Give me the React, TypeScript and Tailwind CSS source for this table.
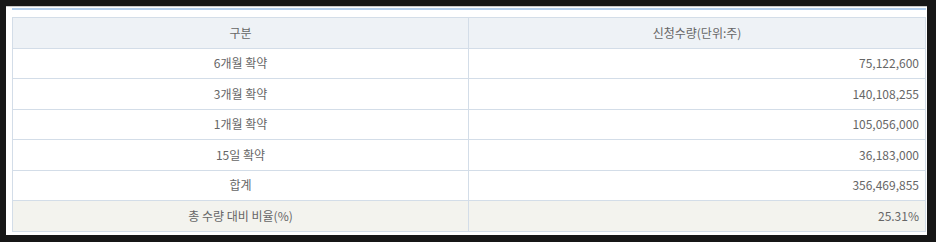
import React from 'react';

interface Row {
  label: string;
  value: string;
  tone?: 'head' | 'foot';
}

const rows: Row[] = [
  { label: '6개월 확약', value: '75,122,600' },
  { label: '3개월 확약', value: '140,108,255' },
  { label: '1개월 확약', value: '105,056,000' },
  { label: '15일 확약', value: '36,183,000' },
  { label: '합계', value: '356,469,855' },
  { label: '총 수량 대비 비율(%)', value: '25.31%', tone: 'foot' },
];

function TableRow({ label, value, tone }: Row): React.JSX.Element {
  const bg = tone === 'head' ? 'bg-[#eef2f6]' : tone === 'foot' ? 'bg-[#f3f3ee]' : 'bg-white';
  return (
    <div className={`flex h-[30.5px] border-b border-[#d3dde8] ${bg}`}>
      <div className="flex w-[456px] items-center justify-center border-r border-[#d3dde8]">{label}</div>
      <div
        className={`flex flex-1 items-center px-[6px] ${tone === 'head' ? 'justify-center' : 'justify-end'}`}
      >
        {value}
      </div>
    </div>
  );
}

export default function App(): React.JSX.Element {
  return (
    <div className="h-[242px] w-[936px] bg-[#171717] pl-[6px] pt-[6px]">
      <div
        className="h-[229px] w-[921px] border-t border-[#c9c9c9] bg-white pl-[6px] pr-[1px] pt-[1px] text-[12px] text-[#666666]"
        style={{ fontFamily: '"Noto Sans CJK KR", "Noto Sans", sans-serif' }}
      >
        <div className="border-t-2 border-[#b3cfee] pt-[7px]">
          <div className="border-t border-l border-r border-[#d3dde8]">
            <TableRow label="구분" value="신청수량(단위:주)" tone="head" />
            {rows.map((r) => (
              <TableRow key={r.label} {...r} />
            ))}
          </div>
        </div>
      </div>
    </div>
  );
}
